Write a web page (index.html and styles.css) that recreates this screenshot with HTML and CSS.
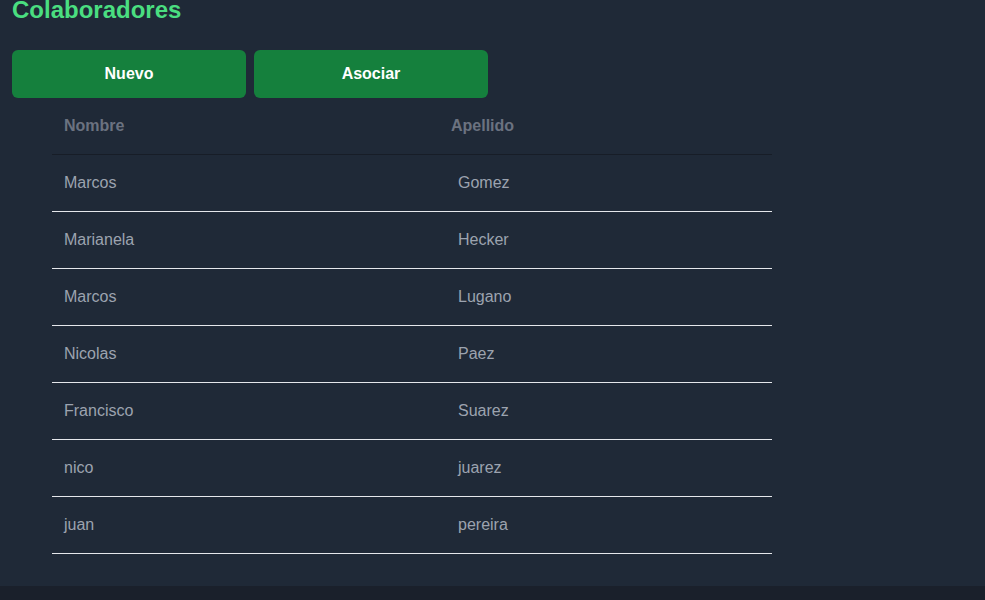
FILE: index.html
```html
<!DOCTYPE html>
<html lang="es">
<head>
<meta charset="utf-8">
<title>Colaboradores</title>
<link rel="stylesheet" href="styles.css">
</head>
<body>
<main class="page">
  <h1 class="title">Colaboradores</h1>
  <div class="actions">
    <button class="btn">Nuevo</button>
    <button class="btn">Asociar</button>
  </div>
  <table class="grid">
    <thead>
      <tr><th class="c1">Nombre</th><th class="c2">Apellido</th></tr>
    </thead>
    <tbody>
      <tr><td class="c1">Marcos</td><td class="c2">Gomez</td></tr>
      <tr><td class="c1">Marianela</td><td class="c2">Hecker</td></tr>
      <tr><td class="c1">Marcos</td><td class="c2">Lugano</td></tr>
      <tr><td class="c1">Nicolas</td><td class="c2">Paez</td></tr>
      <tr><td class="c1">Francisco</td><td class="c2">Suarez</td></tr>
      <tr><td class="c1">nico</td><td class="c2">juarez</td></tr>
      <tr><td class="c1">juan</td><td class="c2">pereira</td></tr>
    </tbody>
  </table>
</main>
<footer class="footer"></footer>
</body>
</html>
```
FILE: styles.css
```css
html, body {
  margin: 0;
  padding: 0;
  background: #1f2937;
  font-family: "Liberation Sans", Arial, sans-serif;
  overflow: hidden;
}
.page {
  height: 586px;
  box-sizing: border-box;
  overflow: hidden;
}
.title {
  margin: -4px 0 0 12px;
  font-size: 24px;
  line-height: 28px;
  font-weight: 700;
  color: #4ade80;
}
.actions {
  display: flex;
  gap: 8px;
  margin: 26px 0 0 12px;
}
.btn {
  width: 234px;
  height: 48px;
  border: none;
  border-radius: 6px;
  background: #15803d;
  color: #ffffff;
  font-family: inherit;
  font-size: 16px;
  font-weight: 700;
  padding: 0;
}
.grid {
  margin-left: 52px;
  width: 720px;
  table-layout: fixed;
  border-collapse: collapse;
  font-size: 16px;
}
.grid th {
  height: 56px;
  padding: 0;
  text-align: left;
  font-weight: 700;
  color: #6b7280;
  border-bottom: 1px solid #171d27;
  vertical-align: middle;
}
.grid td {
  height: 56px;
  padding: 0;
  color: #9ca3af;
  border-bottom: 1px solid #e5e7eb;
  vertical-align: middle;
}
.grid .c1 { width: 387px; padding-left: 12px; box-sizing: border-box; }
.grid th.c2 { padding-left: 12px; }
.grid td.c2 { padding-left: 19px; }
.footer {
  height: 14px;
  background: #1a202b;
}
```
